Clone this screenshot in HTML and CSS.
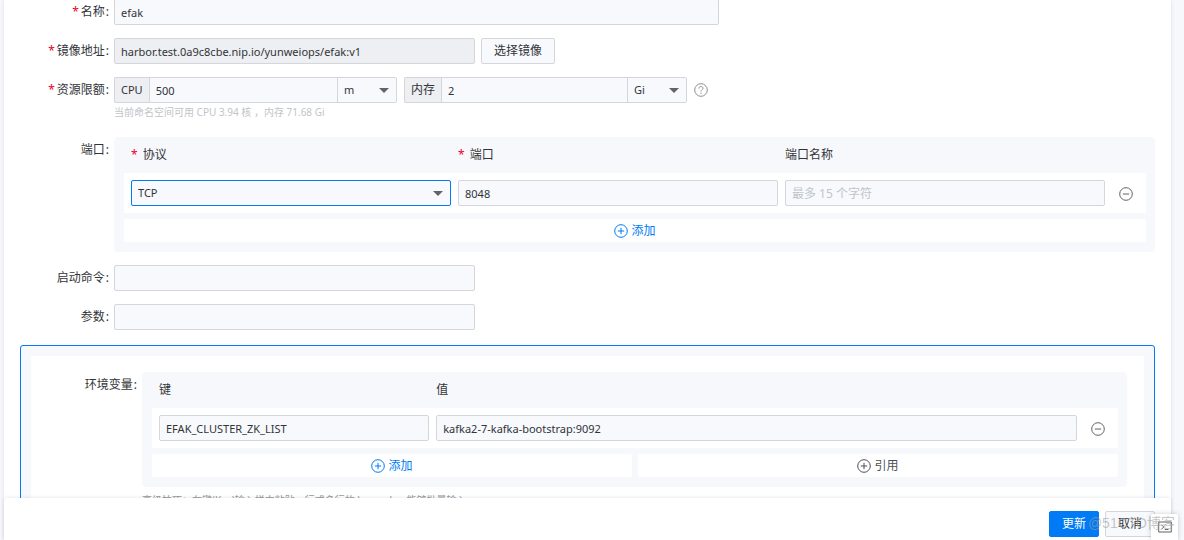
FILE: index.html
```html
<!DOCTYPE html>
<html lang="zh-CN">
<head>
<meta charset="utf-8">
<title>更新 efak</title>
<link rel="stylesheet" href="styles.css">
</head>
<body>
<svg class="sprite" aria-hidden="true">
  <symbol id="plus" viewBox="0 0 14 14"><circle cx="7" cy="7" r="6.300"/><path d="M3.800 7h6.400M7 3.800v6.400"/></symbol>
  <symbol id="minus" viewBox="0 0 14 14"><circle cx="7" cy="7" r="6.300"/><path d="M3.800 7h6.400"/></symbol>
  <symbol id="help" viewBox="0 0 14 14"><circle cx="7" cy="7" r="6.300"/><path d="M5 5.500C5 4.100 5.800 3.500 7 3.500s2 .8 2 1.800C9 6.600 7 6.800 7 8.500M7 9.700v1.300"/></symbol>
  <symbol id="terminal" viewBox="0 0 14 12"><path d="M.7 1h12.600v10H.7zM3.200 3.500L5.700 6 3.200 8.500M7 8.500h3.500"/></symbol>
</svg>
<form class="page">
  <div class="content">
    <div class="row first">
      <label class="label required" for="name">名称</label>
      <input class="field name" id="name" value="efak">
    </div>
    <div class="row">
      <label class="label required" for="image">镜像地址</label>
      <input class="field medium readonly" id="image" value="harbor.test.0a9c8cbe.nip.io/yunweiops/efak:v1" readonly>
      <button class="button" type="button">选择镜像</button>
    </div>
    <div class="row limits">
      <label class="label required" for="cpu">资源限额</label>
      <div class="limit-body">
        <div class="limit-line">
          <div class="group">
            <label class="prefix latin" for="cpu">CPU</label>
            <input class="field amount" id="cpu" value="500">
            <span class="select unit"><select class="field" aria-label="CPU 单位"><option>m</option></select></span>
          </div>
          <div class="group">
            <label class="prefix" for="memory">内存</label>
            <input class="field amount" id="memory" value="2">
            <span class="select unit"><select class="field" aria-label="内存单位"><option>Gi</option></select></span>
          </div>
          <button class="icon-button help" type="button" aria-label="帮助"><svg class="icon"><use href="#help"/></svg></button>
        </div>
        <p class="hint">当前命名空间可用 CPU 3.94 核 ，内存 71.68 Gi</p>
      </div>
    </div>
    <div class="row top">
      <span class="label">端口</span>
      <div class="panel">
        <table class="table">
          <colgroup><col><col><col><col class="col-action"></colgroup>
          <thead><tr><th class="starred">协议</th><th class="starred">端口</th><th>端口名称</th><td></td></tr></thead>
          <tbody><tr>
            <td><span class="select focused"><select class="field" aria-label="协议"><option>TCP</option></select></span></td>
            <td><input class="field" aria-label="端口" value="8048"></td>
            <td><input class="field" aria-label="端口名称" placeholder="最多 15 个字符"></td>
            <td class="action"><button class="icon-button" type="button" aria-label="移除"><svg class="icon"><use href="#minus"/></svg></button></td>
          </tr></tbody>
        </table>
        <div class="adders">
          <button class="adder primary" type="button"><svg class="icon"><use href="#plus"/></svg>添加</button>
        </div>
      </div>
    </div>
    <div class="row">
      <label class="label" for="command">启动命令</label>
      <input class="field medium" id="command">
    </div>
    <div class="row">
      <label class="label" for="args">参数</label>
      <input class="field medium" id="args">
    </div>
    <section class="highlight">
      <div class="sheet">
        <div class="row top">
          <span class="label">环境变量</span>
          <div class="env">
            <div class="panel">
              <table class="table">
                <colgroup><col class="col-key"><col><col class="col-action"></colgroup>
                <thead><tr><th>键</th><th>值</th><td></td></tr></thead>
                <tbody><tr>
                  <td><input class="field" aria-label="键" value="EFAK_CLUSTER_ZK_LIST"></td>
                  <td><input class="field" aria-label="值" value="kafka2-7-kafka-bootstrap:9092"></td>
                  <td class="action"><button class="icon-button" type="button" aria-label="移除"><svg class="icon"><use href="#minus"/></svg></button></td>
                </tr></tbody>
              </table>
              <div class="adders">
                <button class="adder primary" type="button"><svg class="icon"><use href="#plus"/></svg>添加</button>
                <button class="adder" type="button"><svg class="icon"><use href="#plus"/></svg>引用</button>
              </div>
            </div>
            <p class="tip">高级技巧：在键(Key)输入栏中粘贴一行或多行的 key=value 能够批量输入</p>
          </div>
        </div>
      </div>
    </section>
  </div>
  <footer class="footer">
    <button class="button submit" type="submit">更新</button>
    <button class="button" type="button">取消</button>
  </footer>
</form>
<button class="terminal" type="button" aria-label="终端"><svg class="icon"><use href="#terminal"/></svg></button>
<span class="watermark">@51CTO博客</span>
</body>
</html>
```
FILE: styles.css
```css
* { box-sizing: border-box; }

body {
  margin: 0;
  height: 100vh;
  overflow: hidden;
  background: #f7f8fc;
  color: #323437;
  font: 12px/18px "Noto Sans", "Noto Sans CJK SC", sans-serif;
}

button, input, select { font: inherit; color: inherit; margin: 0; }
button { cursor: pointer; }
p { margin: 0; }

.sprite { position: absolute; width: 0; height: 0; }

.icon {
  width: 14px;
  height: 14px;
  flex: none;
  fill: none;
  stroke: currentColor;
}

.page {
  display: flex;
  flex-direction: column;
  height: 100%;
  margin: 0 13px 0 4px;
  background: #fff;
  box-shadow: 0 0 4px rgba(50, 60, 90, 0.12);
}

.content {
  flex: 1;
  min-height: 0;
  overflow: hidden;
  padding: 0 16px;
}

.row {
  display: flex;
  align-items: center;
  margin-bottom: 13px;
}

.row.first { margin-top: -1px; }
.row.top, .row.limits { align-items: flex-start; }

.label {
  flex: none;
  width: 94px;
  padding-right: 5px;
  text-align: right;
}

.label::after { content: ":"; margin-left: 1px; }

.limits .label,
.top > .label { padding-top: 4px; }

.required::before, .starred::before {
  content: "*";
  color: #eb0027;
  margin-right: 2px;
}

.starred::before { margin-right: 5px; }

.field {
  width: 100%;
  height: 26px;
  padding: 0 6px;
  border: 1px solid #d4d6db;
  border-radius: 2px;
  background: #f7f9fd;
  outline: 0;
  font-size: 11px;
}

.field::placeholder { color: #c2c4c9; opacity: 1; font-size: 12px; }
.name { width: 605px; }
.medium { width: 361px; margin-right: 6px; }
.readonly { background: #edeff3; }

.button {
  height: 26px;
  padding: 0 12px;
  border: 1px solid #d4d6db;
  border-radius: 2px;
  background: #f7f9fd;
}

.row.limits { margin-bottom: 17px; }
.limit-line { display: flex; align-items: center; gap: 7px; }
.group { display: flex; width: 283px; }

.prefix {
  flex: none;
  padding: 3px 6px;
  border: 1px solid #d4d6db;
  border-right: 0;
  border-radius: 2px 0 0 2px;
  background: #edeff3;
}

.latin { font-size: 11px; }

.amount { flex: 1; min-width: 0; border-radius: 0; }

.select { position: relative; display: block; }
.select .field { display: block; appearance: none; }
.select::after {
  content: "";
  position: absolute;
  top: 11px;
  right: 8px;
  border: 5px solid transparent;
  border-top-color: #606367;
  border-bottom: 0;
  pointer-events: none;
}

.unit { flex: none; width: 59px; }
.unit .field { border-left: 0; border-radius: 0 2px 2px 0; }
.focused .field { border-color: #007af5; }

.icon-button {
  display: inline-flex;
  padding: 0;
  border: 0;
  background: none;
  color: #606367;
}

.help { color: #8c8f94; }

.hint {
  margin-top: 2px;
  color: #c2c4c9;
  font-size: 10px;
  line-height: 15px;
}

.panel {
  flex: 1;
  padding: 0 9px 10px 10px;
  border-radius: 4px;
  background: #f7f8fc;
}

.table {
  width: 100%;
  table-layout: fixed;
  border-collapse: collapse;
}

.table th {
  height: 36px;
  padding: 0 0 0 7px;
  font-weight: 400;
  text-align: left;
}

.table td { padding: 0 0 0 7px; }
.table tbody td { height: 40px; background: #fff; }
.table tbody .action { padding: 0; text-align: center; vertical-align: middle; }
.table .icon-button { vertical-align: middle; }
.col-action { width: 41px; }
.col-key { width: 28.7%; }

.adders { display: flex; gap: 6px; margin-top: 6px; }

.adder {
  flex: 1;
  display: flex;
  align-items: center;
  justify-content: center;
  gap: 3px;
  height: 23px;
  padding: 0;
  border: 0;
  border-radius: 2px;
  background: #fff;
  color: #4c4f54;
}

.adder.primary { color: #007af5; }

.highlight {
  margin-top: 15px;
  padding: 10px;
  border: 1px solid #007af5;
  border-radius: 3px;
  background: #f7f8fc;
}

.sheet {
  padding: 16px 17px;
  border-radius: 2px;
  background: #fff;
}

.env { flex: 1; }
.tip { margin-top: 4px; color: #96989b; font-size: 10px; }

.footer {
  position: relative;
  display: flex;
  justify-content: flex-end;
  gap: 6px;
  padding: 13px 16px 3px;
  border-radius: 4px 4px 0 0;
  background: #fff;
  box-shadow: 0 0 4px rgba(50, 60, 90, 0.14);
}

.submit { border-color: #007af5; background: #007af5; color: #fff; }

.terminal {
  position: absolute;
  right: 6px;
  bottom: 0;
  display: flex;
  align-items: center;
  justify-content: center;
  width: 27px;
  height: 26px;
  padding: 0;
  border: 0;
  border-radius: 2px 2px 0 0;
  background: #fff;
  color: #606367;
  box-shadow: 0 0 5px rgba(50, 60, 90, 0.25);
}

.watermark {
  position: absolute;
  right: 9px;
  bottom: 8px;
  color: rgba(160, 160, 160, 0.6);
  font-family: "Liberation Sans", "Noto Sans CJK SC", sans-serif;
  font-size: 14px;
  pointer-events: none;
}
```
